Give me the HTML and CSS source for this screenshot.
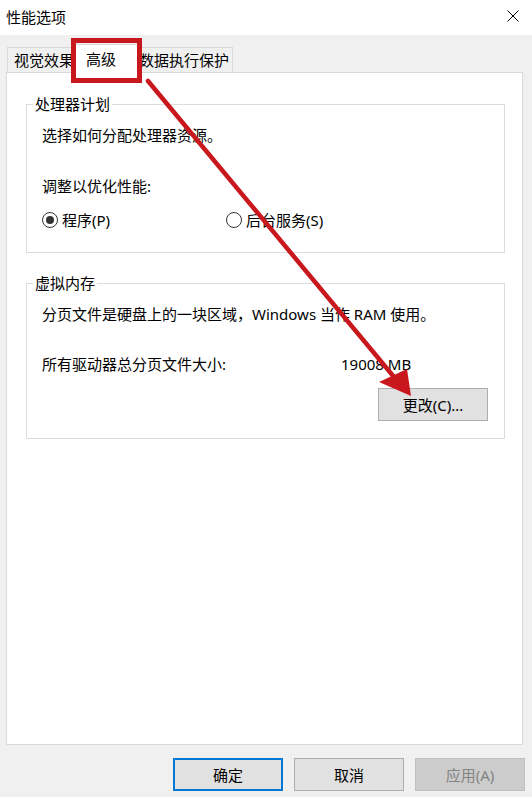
FILE: index.html
```html
<!DOCTYPE html>
<html lang="zh-CN">
<head>
<meta charset="utf-8">
<title>性能选项</title>
<link rel="stylesheet" href="styles.css">
</head>
<body>
<div class="window">
  <div class="titlebar">
    <span class="title">性能选项</span>
    <svg class="close" width="12" height="12" viewBox="0 0 12 12"><path d="M0.5 0.5 L11.5 11.5 M11.5 0.5 L0.5 11.5" stroke="#000" stroke-width="1" fill="none"/></svg>
  </div>
  <div class="tabs">
    <div class="tab tab-visual">视觉效果</div>
    <div class="tab tab-advanced active">高级</div>
    <div class="tab tab-dep">数据执行保护</div>
  </div>
  <div class="panel">
    <fieldset class="group group-cpu">
      <legend>处理器计划</legend>
      <div class="group-body">
        <p class="line first">选择如何分配处理器资源。</p>
        <p class="line second">调整以优化性能:</p>
        <div class="radios">
          <label class="radio radio-program"><span class="dot checked"></span>程序(P)</label>
          <label class="radio"><span class="dot"></span>后台服务(S)</label>
        </div>
      </div>
    </fieldset>
    <fieldset class="group group-mem">
      <legend>虚拟内存</legend>
      <div class="group-body">
        <p class="line first">分页文件是硬盘上的一块区域，Windows 当作 RAM 使用。</p>
        <div class="line second size-row"><span class="size-label">所有驱动器总分页文件大小:</span><span>19008 MB</span></div>
        <div class="change-row"><button class="btn change">更改(C)...</button></div>
      </div>
    </fieldset>
  </div>
  <div class="footer">
    <button class="btn default">确定</button>
    <button class="btn">取消</button>
    <button class="btn disabled">应用(A)</button>
  </div>
  <div class="highlight"></div>
  <svg class="arrow" width="532" height="797" viewBox="0 0 532 797">
    <line x1="148" y1="81" x2="394" y2="377" stroke="#c8171d" stroke-width="4.5" stroke-linecap="round"/>
    <polygon points="379,382 407,369 411,396" fill="#c8171d"/>
  </svg>
</div>
</body>
</html>
```

FILE: styles.css
```css
* { box-sizing: border-box; }
html, body { margin: 0; padding: 0; }
body {
  font-family: "Noto Sans", "Noto Sans CJK SC", sans-serif;
  font-size: 15px;
  color: #000;
  background: #f0f0f0;
}
.window {
  position: relative;
  width: 532px;
  height: 797px;
  background: #f0f0f0;
  overflow: hidden;
}
.titlebar {
  height: 35px;
  background: #fff;
  display: flex;
  align-items: center;
  justify-content: space-between;
  padding: 0 13px 0 6px;
  line-height: 35px;
}
.close { display: block; margin-bottom: 3px; }
.tabs {
  height: 37px;
  display: flex;
  align-items: flex-end;
  padding-left: 7px;
}
.tab {
  height: 25px;
  line-height: 24px;
  border: 1px solid #d9d9d9;
  border-bottom: none;
  background: #f0f0f0;
  white-space: nowrap;
}
.tab-visual { width: 68px; padding-left: 6px; overflow: hidden; }
.tab-dep { width: 97px; padding-left: 3px; border-left: none; }
.tab.active {
  position: relative;
  z-index: 1;
  width: 65px;
  height: 29px;
  line-height: 28px;
  margin: 0 -2px -1px -2px;
  padding-left: 12px;
  background: #fff;
}
.panel {
  margin: 0 9px 0 6px;
  height: 673px;
  background: #fff;
  border: 1px solid #d9d9d9;
}
.group {
  margin: 0 17px 0 19px;
  padding: 0;
  border: 1px solid #dcdcdc;
  min-width: 0;
}
.group legend {
  margin-left: 6px;
  padding: 0 2px;
  line-height: 20px;
}
.group-cpu { margin-top: 21px; }
.group-mem { margin-top: 20px; }
.group-body { padding: 0 16px 0 15px; }
.group-cpu .group-body { padding-bottom: 22px; }
.group-mem .group-body { padding-bottom: 17px; }
.line { margin: 0; line-height: 20px; }
.line.first { margin-top: 11px; }
.group-cpu .line.second { margin-top: 31px; }
.group-mem .line.second { margin-top: 30px; }
.radios {
  margin-top: 14px;
  display: flex;
  line-height: 20px;
}
.radio {
  display: flex;
  align-items: center;
  gap: 4px;
}
.radio-program { width: 184px; }
.dot {
  width: 16px;
  height: 16px;
  border: 1px solid #333;
  border-radius: 50%;
  display: flex;
  align-items: center;
  justify-content: center;
  background: #fff;
}
.dot.checked::after {
  content: "";
  width: 8px;
  height: 8px;
  border-radius: 50%;
  background: #333;
}
.size-row { display: flex; }
.size-label { width: 299px; }
.change-row {
  margin-top: 14px;
  display: flex;
  justify-content: flex-end;
}
.btn {
  font-family: inherit;
  font-size: 15px;
  color: #000;
  width: 110px;
  height: 33px;
  padding: 0;
  background: #e1e1e1;
  border: 1px solid #adadad;
  border-radius: 0;
  line-height: 20px;
}
.footer {
  margin-top: 13px;
  display: flex;
  justify-content: flex-end;
  gap: 11px;
  padding-right: 7px;
}
.btn.default { border: 2px solid #0078d7; }
.btn.disabled {
  background: #cccccc;
  border-color: #bfbfbf;
  color: #838383;
}
.highlight {
  position: absolute;
  left: 71px;
  top: 38px;
  width: 71px;
  height: 45px;
  border: 5px solid #c8171d;
  z-index: 2;
}
.arrow {
  position: absolute;
  left: 0;
  top: 0;
  z-index: 3;
  pointer-events: none;
}
```
